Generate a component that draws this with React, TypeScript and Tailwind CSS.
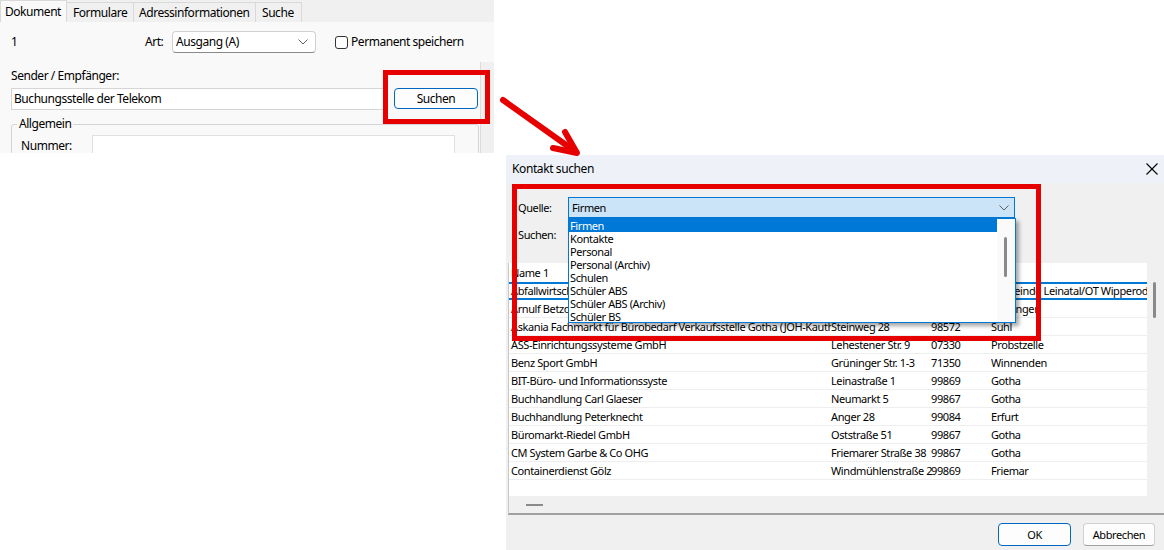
import React from "react";

const rows: string[][] = [
  ["Abfallwirtschaftszweckverband Mittelthüringen", "Gemeindestraße 3", "99880", "Gemeinde Leinatal/OT Wipperoda"],
  ["Arnulf Betzold GmbH", "Ellwanger Str. 4", "73479", "Ellwangen"],
  ["Askania Fachmarkt für Bürobedarf Verkaufsstelle Gotha (JOH-Kauth)", "Steinweg 28", "98572", "Suhl"],
  ["ASS-Einrichtungssysteme GmbH", "Lehestener Str. 9", "07330", "Probstzelle"],
  ["Benz Sport GmbH", "Grüninger Str. 1-3", "71350", "Winnenden"],
  ["BIT-Büro- und Informationssyste", "Leinastraße 1", "99869", "Gotha"],
  ["Buchhandlung Carl Glaeser", "Neumarkt 5", "99867", "Gotha"],
  ["Buchhandlung Peterknecht", "Anger 28", "99084", "Erfurt"],
  ["Büromarkt-Riedel GmbH", "Oststraße 51", "99867", "Gotha"],
  ["CM System Garbe & Co OHG", "Friemarer Straße 38", "99867", "Gotha"],
  ["Containerdienst Gölz", "Windmühlenstraße 2", "99869", "Friemar"],
];

const sources = [
  "Firmen",
  "Kontakte",
  "Personal",
  "Personal (Archiv)",
  "Schulen",
  "Schüler ABS",
  "Schüler ABS (Archiv)",
  "Schüler BS",
];

function Chevron() {
  return (
    <svg width="10" height="6" viewBox="0 0 10 6" className="shrink-0">
      <polyline points="0.5,0.5 5,5 9.5,0.5" fill="none" stroke="#606060" strokeWidth="1" />
    </svg>
  );
}

function LeftWindow() {
  return (
    <div className="absolute left-0 top-0 w-[494px] h-[153px] overflow-hidden bg-[#f0f0f0] text-[12px] leading-[16px] tracking-[-0.45px] text-black">
      <div className="flex items-end h-[22px]">
        <div className="h-[22px] w-[67px] shrink-0 whitespace-nowrap bg-[#f9f9f9] border border-b-0 border-[#d9d9d9] pl-[4px] flex items-center">Dokument</div>
        <div className="h-[20px] w-[67px] shrink-0 whitespace-nowrap border-t border-r border-[#d9d9d9] pl-[6px] flex items-center">Formulare</div>
        <div className="h-[20px] w-[122px] shrink-0 whitespace-nowrap border-t border-r border-[#d9d9d9] pl-[5px] flex items-center">Adressinformationen</div>
        <div className="h-[20px] w-[46px] shrink-0 whitespace-nowrap border-t border-r border-[#d9d9d9] pl-[6px] flex items-center">Suche</div>
      </div>
      <div className="flex h-[131px] bg-[#f9f9f9]">
        <div className="w-[480px] flex flex-col">
          <div className="flex items-center mt-[9px] h-[22px] pl-[11px]">
            <span className="w-[134px]">1</span>
            <span className="w-[27px]">Art:</span>
            <div className="w-[144px] h-[22px] bg-white border border-[#d0d0d0] border-b-[#8a8a8a] rounded-[4px] flex items-center justify-between pl-[3px] pr-[7px]">
              <span>Ausgang (A)</span>
              <Chevron />
            </div>
            <div className="ml-[19px] w-[13px] h-[13px] border border-[#333] rounded-[3px] bg-white" />
            <span className="ml-[3px]">Permanent speichern</span>
          </div>
          <div className="ml-[11px] mt-[7px] h-px bg-[#a0a0a0]" />
          <div className="ml-[11px] mt-[8px] h-[16px]">Sender / Empfänger:</div>
          <div className="flex mt-[4px] h-[22px]">
            <div className="ml-[11px] w-[373px] h-[22px] bg-white border border-[#d5d5d5] flex items-center pl-[2px]">Buchungsstelle der Telekom</div>
            <div className="ml-[10px] w-[84px] h-[21px] bg-[#fdfdfd] border border-[#0067c0] rounded-[4px] flex items-center justify-center">Suchen</div>
          </div>
          <fieldset className="ml-[11px] mt-[6px] w-[468px] border border-[#d5d5d5] rounded-[3px] pl-[5px] pr-[8px] pb-[4px]">
            <legend className="px-[2px] leading-[16px]">Allgemein</legend>
            <div className="flex items-center mt-[3px]">
              <span className="w-[75px] pl-[4px]">Nummer:</span>
              <div className="w-[363px] h-[22px] bg-white border border-[#e0e0e0]" />
            </div>
          </fieldset>
        </div>
        <div className="w-[14px] flex flex-col">
          <div className="h-[40px]" />
          <div className="flex-1 bg-[#f0f0f0] border-l border-[#dcdcdc]" />
        </div>
      </div>
    </div>
  );
}

function Dialog() {
  return (
    <div className="absolute left-[506px] top-[155px] w-[658px] h-[395px] bg-[#f0f0f0] flex flex-col text-[11px] leading-[14px] tracking-[-0.4px] text-black">
      <div className="h-[28px] shrink-0 bg-[#eef2f8] flex items-center justify-between pl-[6px] pr-[6px] text-[12px]">
        <span>Kontakt suchen</span>
        <svg width="12" height="12" viewBox="0 0 12 12">
          <line x1="0.5" y1="0.5" x2="11.5" y2="11.5" stroke="#000" strokeWidth="1.1" />
          <line x1="11.5" y1="0.5" x2="0.5" y2="11.5" stroke="#000" strokeWidth="1.1" />
        </svg>
      </div>
      <div className="flex items-center mt-[14px] h-[21px] shrink-0">
        <span className="w-[62px] pl-[12px]">Quelle:</span>
        <div className="relative">
          <div className="w-[447px] h-[21px] bg-[#cce4f7] border border-[#0078d7] flex items-center justify-between pl-[3px] pr-[5px]">
            <span>Firmen</span>
            <Chevron />
          </div>
          <div className="absolute left-0 top-[21px] z-20 w-[448px] h-[105px] bg-white border border-[#0078d7] shadow-[3px_3px_4px_rgba(0,0,0,0.35)] flex">
            <div className="flex-1 flex flex-col">
              {sources.map((s, i) => (
                <div
                  key={s}
                  className={
                    i === 0
                      ? "h-[13px] leading-[13px] pl-[1px] bg-[#0078d7] text-white"
                      : "h-[13px] leading-[13px] pl-[1px]"
                  }
                >
                  {s}
                </div>
              ))}
            </div>
            <div className="w-[18px] bg-[#fafafa] pt-[18px] pl-[7px]">
              <div className="w-[3px] h-[40px] rounded-full bg-[#8a8a8a]" />
            </div>
          </div>
        </div>
      </div>
      <div className="flex items-center mt-[6px] h-[21px] shrink-0">
        <span className="w-[62px] pl-[12px]">Suchen:</span>
        <div className="w-[447px] h-[21px] bg-white border border-[#d0d0d0]" />
      </div>
      <div className="mt-[18px] ml-[2px] h-[252px] shrink-0 flex flex-col border-l border-[#c8c8c8] border-b-2 border-b-[#a0a0a0]">
        <div className="flex-1 flex min-h-0">
          <div className="flex-1 min-w-0 bg-white flex flex-col overflow-hidden">
            <div className="h-[19px] flex items-center pl-[2px]">Name 1</div>
            {rows.map((r, i) => (
              <div
                key={r[0]}
                className={
                  i === 0
                    ? "h-[18px] flex items-center overflow-hidden border-y-2 border-[#0078d7]"
                    : "h-[18px] flex items-center overflow-hidden border-b border-[#eeeeee]"
                }
              >
                <span className="w-[322px] shrink-0 pl-[2px] overflow-hidden whitespace-nowrap">{r[0]}</span>
                <span className="w-[100px] shrink-0 whitespace-nowrap">{r[1]}</span>
                <span className="w-[60px] shrink-0 overflow-hidden whitespace-nowrap">{r[2]}</span>
                <span className="flex-1 min-w-0 overflow-hidden whitespace-nowrap">{r[3]}</span>
              </div>
            ))}
          </div>
          <div className="w-[17px] shrink-0 bg-[#f0f0f0] mt-[2px] pt-[17px] pl-[6px]">
            <div className="w-[3px] h-[36px] rounded-full bg-[#8a8a8a]" />
          </div>
        </div>
        <div className="h-[17px] bg-[#f0f0f0] flex items-center pl-[17px]">
          <div className="w-[17px] h-[2px] bg-[#8a8a8a]" />
        </div>
      </div>
      <div className="flex-1 flex justify-end items-start pt-[8px] pr-[9px] gap-[12px]">
        <div className="w-[73px] h-[23px] bg-[#fdfdfd] border border-[#0067c0] rounded-[4px] flex items-center justify-center">OK</div>
        <div className="w-[72px] h-[23px] bg-[#fdfdfd] border border-[#d0d0d0] border-b-[#a0a0a0] rounded-[4px] flex items-center justify-center">Abbrechen</div>
      </div>
    </div>
  );
}

export default function App() {
  return (
    <div className="relative w-[1164px] h-[550px] bg-white overflow-hidden font-['Noto_Sans',sans-serif]">
      <LeftWindow />
      <Dialog />
      <div className="absolute left-[383px] top-[70px] w-[107px] h-[54px] border-[5px] border-[#e60000]" />
      <div className="absolute left-[512px] top-[184px] w-[529px] h-[157px] border-[5px] border-[#e60000] z-30" />
      <svg className="absolute left-[490px] top-[90px]" width="100" height="75" viewBox="0 0 100 75">
        <line x1="13" y1="10" x2="86" y2="62" stroke="#e60000" strokeWidth="6" strokeLinecap="round" />
        <polyline points="63,58 87,63 75,42" fill="none" stroke="#e60000" strokeWidth="6" strokeLinecap="round" strokeLinejoin="round" />
      </svg>
    </div>
  );
}
